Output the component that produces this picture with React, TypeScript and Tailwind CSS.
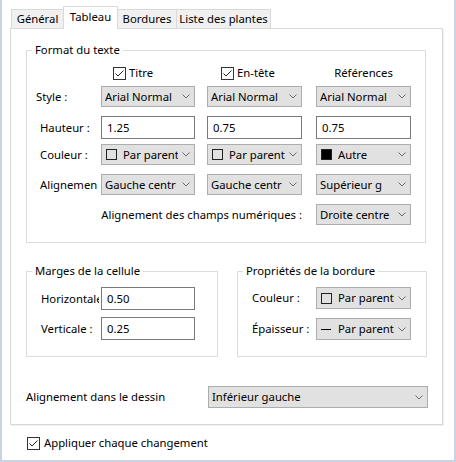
import React from 'react';

type Swatch = 'empty' | 'black' | 'line';

function Chevron() {
  return (
    <svg width="8" height="5" viewBox="0 0 8 5" className="shrink-0">
      <path d="M0.5 0.5 L4 4 L7.5 0.5" fill="none" stroke="#6d6d6d" strokeWidth="1" />
    </svg>
  );
}

function CheckBox() {
  return (
    <span className="flex size-[13px] shrink-0 items-center justify-center border border-[#333] bg-white">
      <svg width="11" height="11" viewBox="0 0 11 11">
        <path d="M1.5 5.5 L4 8 L9.5 2.5" fill="none" stroke="#222" strokeWidth="1" />
      </svg>
    </span>
  );
}

function SwatchIcon({ kind }: { kind: Swatch }) {
  if (kind === 'line') {
    return (
      <span className="flex w-[11px] shrink-0 items-center">
        <span className="h-px w-[10px] bg-black" />
      </span>
    );
  }
  return (
    <span
      className={`size-[11px] shrink-0 border border-[#222] ${kind === 'black' ? 'bg-black' : 'bg-transparent'}`}
    />
  );
}

interface SelectProps {
  text: string;
  swatch?: Swatch;
  width: string; // full tailwind width class
  clip?: string; // width of the visible text area, if cut
  height?: string;
}

function Select({ text, swatch, width, clip, height = 'h-[21px]' }: SelectProps) {
  return (
    <div className={`flex ${height} ${width} shrink-0 items-center border border-[#adadad] bg-[#e1e1e1]`}>
      <div className={`flex min-w-0 flex-1 items-center overflow-hidden whitespace-nowrap ${swatch ? 'gap-[6px] pl-[4px]' : 'pl-[3px]'}`}>
        {swatch && <SwatchIcon kind={swatch} />}
        <span className={`overflow-hidden whitespace-nowrap ${clip ?? ''}`}>{text}</span>
      </div>
      <div className="flex w-[16px] shrink-0 justify-center pr-[1px]">
        <Chevron />
      </div>
    </div>
  );
}

function TextInput({ value, width }: { value: string; width: string }) {
  return (
    <div className={`flex h-[23px] ${width} shrink-0 items-center border border-[#7a7a7a] bg-white pl-[5px]`}>
      {value}
    </div>
  );
}

function Group({ title, className, children }: { title: string; className: string; children: React.ReactNode }) {
  return (
    <div className={`relative shrink-0 border border-[#dcdcdc] ${className}`}>
      <span className="absolute left-[5px] top-[-9px] whitespace-nowrap bg-white px-[3px] leading-[16px]">{title}</span>
      {children}
    </div>
  );
}

const tabs = [
  { label: 'Général', w: 'w-[53px]' },
  { label: 'Tableau', w: 'w-[55px]', active: true },
  { label: 'Bordures', w: 'w-[60px]' },
  { label: 'Liste des plantes', w: 'w-[95px]' },
];

export default function App() {
  return (
    <div className="h-[462px] w-[456px] border-x-2 border-b-2 border-[#cbd2e4] bg-white pl-2 pt-[6px] font-['Noto_Sans',sans-serif] text-[11.3px] leading-[16px] text-black">
      {/* tab strip */}
      <div className="flex h-[22px] items-end pl-px">
        {tabs.map((t, i) =>
          t.active ? (
            <div
              key={t.label}
              className={`relative z-10 -mb-px flex h-[23px] ${t.w} items-center justify-center whitespace-nowrap border border-b-0 border-[#d9d9d9] bg-white pb-[2px] ${i > 0 ? '-ml-px' : ''}`}
            >
              {t.label}
            </div>
          ) : (
            <div
              key={t.label}
              className={`flex h-[19px] ${t.w} items-center justify-center whitespace-nowrap border border-b-0 border-[#d9d9d9] bg-[#f0f0f0] ${i > 0 ? '-ml-px' : ''}`}
            >
              {t.label}
            </div>
          )
        )}
      </div>

      {/* tab page */}
      <div className="h-[397px] w-[433px] border border-[#d9d9d9] bg-white pl-[15px] pt-[21px] shadow-[1px_1px_0_#f0f0f0]">
        <Group title="Format du texte" className="h-[193px] w-[400px] pl-[9px] pt-[12px]">
          <div className="flex h-[20px] items-center">
            <div className="w-[65px]" />
            <div className="flex w-[94px] items-center gap-[3px] pl-[12px]">
              <CheckBox />
              <span>Titre</span>
            </div>
            <div className="ml-[12px] flex w-[95px] items-center gap-[3px] pl-[14px]">
              <CheckBox />
              <span>En-tête</span>
            </div>
            <div className="ml-[14px] w-[95px] text-center">Références</div>
          </div>

          <div className="mt-[3px] flex h-[21px] items-center">
            <div className="w-[65px]">Style :</div>
            <Select text="Arial Normal" width="w-[94px]" />
            <div className="ml-[12px]">
              <Select text="Arial Normal" width="w-[95px]" />
            </div>
            <div className="ml-[14px]">
              <Select text="Arial Normal" width="w-[95px]" />
            </div>
          </div>

          <div className="mt-[9px] flex h-[23px] items-center">
            <div className="w-[65px] pl-[4px]">Hauteur :</div>
            <TextInput value="1.25" width="w-[94px]" />
            <div className="ml-[12px]">
              <TextInput value="0.75" width="w-[95px]" />
            </div>
            <div className="ml-[14px]">
              <TextInput value="0.75" width="w-[95px]" />
            </div>
          </div>

          <div className="mt-[5px] flex h-[21px] items-center">
            <div className="w-[65px] pl-[4px]">Couleur :</div>
            <Select text="Par parent" swatch="empty" width="w-[94px]" />
            <div className="ml-[12px]">
              <Select text="Par parent" swatch="empty" width="w-[95px]" />
            </div>
            <div className="ml-[14px]">
              <Select text="Autre" swatch="black" width="w-[95px]" />
            </div>
          </div>

          <div className="mt-[9px] flex h-[21px] items-center">
            <div className="w-[65px] pl-[4px]">
              <div className="w-[57px] overflow-hidden whitespace-nowrap">Alignement :</div>
            </div>
            <Select text="Gauche centre" clip="w-[71px]" width="w-[94px]" />
            <div className="ml-[12px]">
              <Select text="Gauche centre" clip="w-[71px]" width="w-[95px]" />
            </div>
            <div className="ml-[14px]">
              <Select text="Supérieur gauche" clip="w-[62px]" width="w-[95px]" />
            </div>
          </div>

          <div className="mt-[9px] flex h-[21px] items-center">
            <div className="w-[266px] whitespace-nowrap text-right">Alignement des champs numériques :</div>
            <div className="ml-[14px]">
              <Select text="Droite centre" width="w-[95px]" />
            </div>
          </div>
        </Group>

        <div className="mt-[28px] flex">
          <Group title="Marges de la cellule" className="h-[86px] w-[192px] pl-[14px] pt-[15px]">
            <div className="flex h-[23px] items-center">
              <div className="w-[60px]">
                <div className="w-[58px] overflow-hidden whitespace-nowrap">Horizontale :</div>
              </div>
              <TextInput value="0.50" width="w-[94px]" />
            </div>
            <div className="mt-[7px] flex h-[23px] items-center">
              <div className="w-[60px]">Verticale :</div>
              <TextInput value="0.25" width="w-[94px]" />
            </div>
          </Group>

          <Group title="Propriétés de la bordure" className="ml-[19px] h-[86px] w-[190px] pl-[14px] pt-[15px]">
            <div className="flex h-[22px] items-center">
              <div className="w-[64px]">Couleur :</div>
              <Select text="Par parent" swatch="empty" width="w-[95px]" height="h-[22px]" />
            </div>
            <div className="mt-[9px] flex h-[22px] items-center">
              <div className="w-[64px]">Épaisseur :</div>
              <Select text="Par parent" swatch="line" width="w-[95px]" height="h-[22px]" />
            </div>
          </Group>
        </div>

        <div className="mt-[29px] flex h-[22px] items-center">
          <div className="w-[182px]">Alignement dans le dessin</div>
          <Select text="Inférieur gauche" width="w-[220px]" height="h-[22px]" />
        </div>
      </div>

      <div className="ml-[17px] mt-[10px] flex items-center gap-[4px]">
        <CheckBox />
        <span>Appliquer chaque changement</span>
      </div>
    </div>
  );
}
